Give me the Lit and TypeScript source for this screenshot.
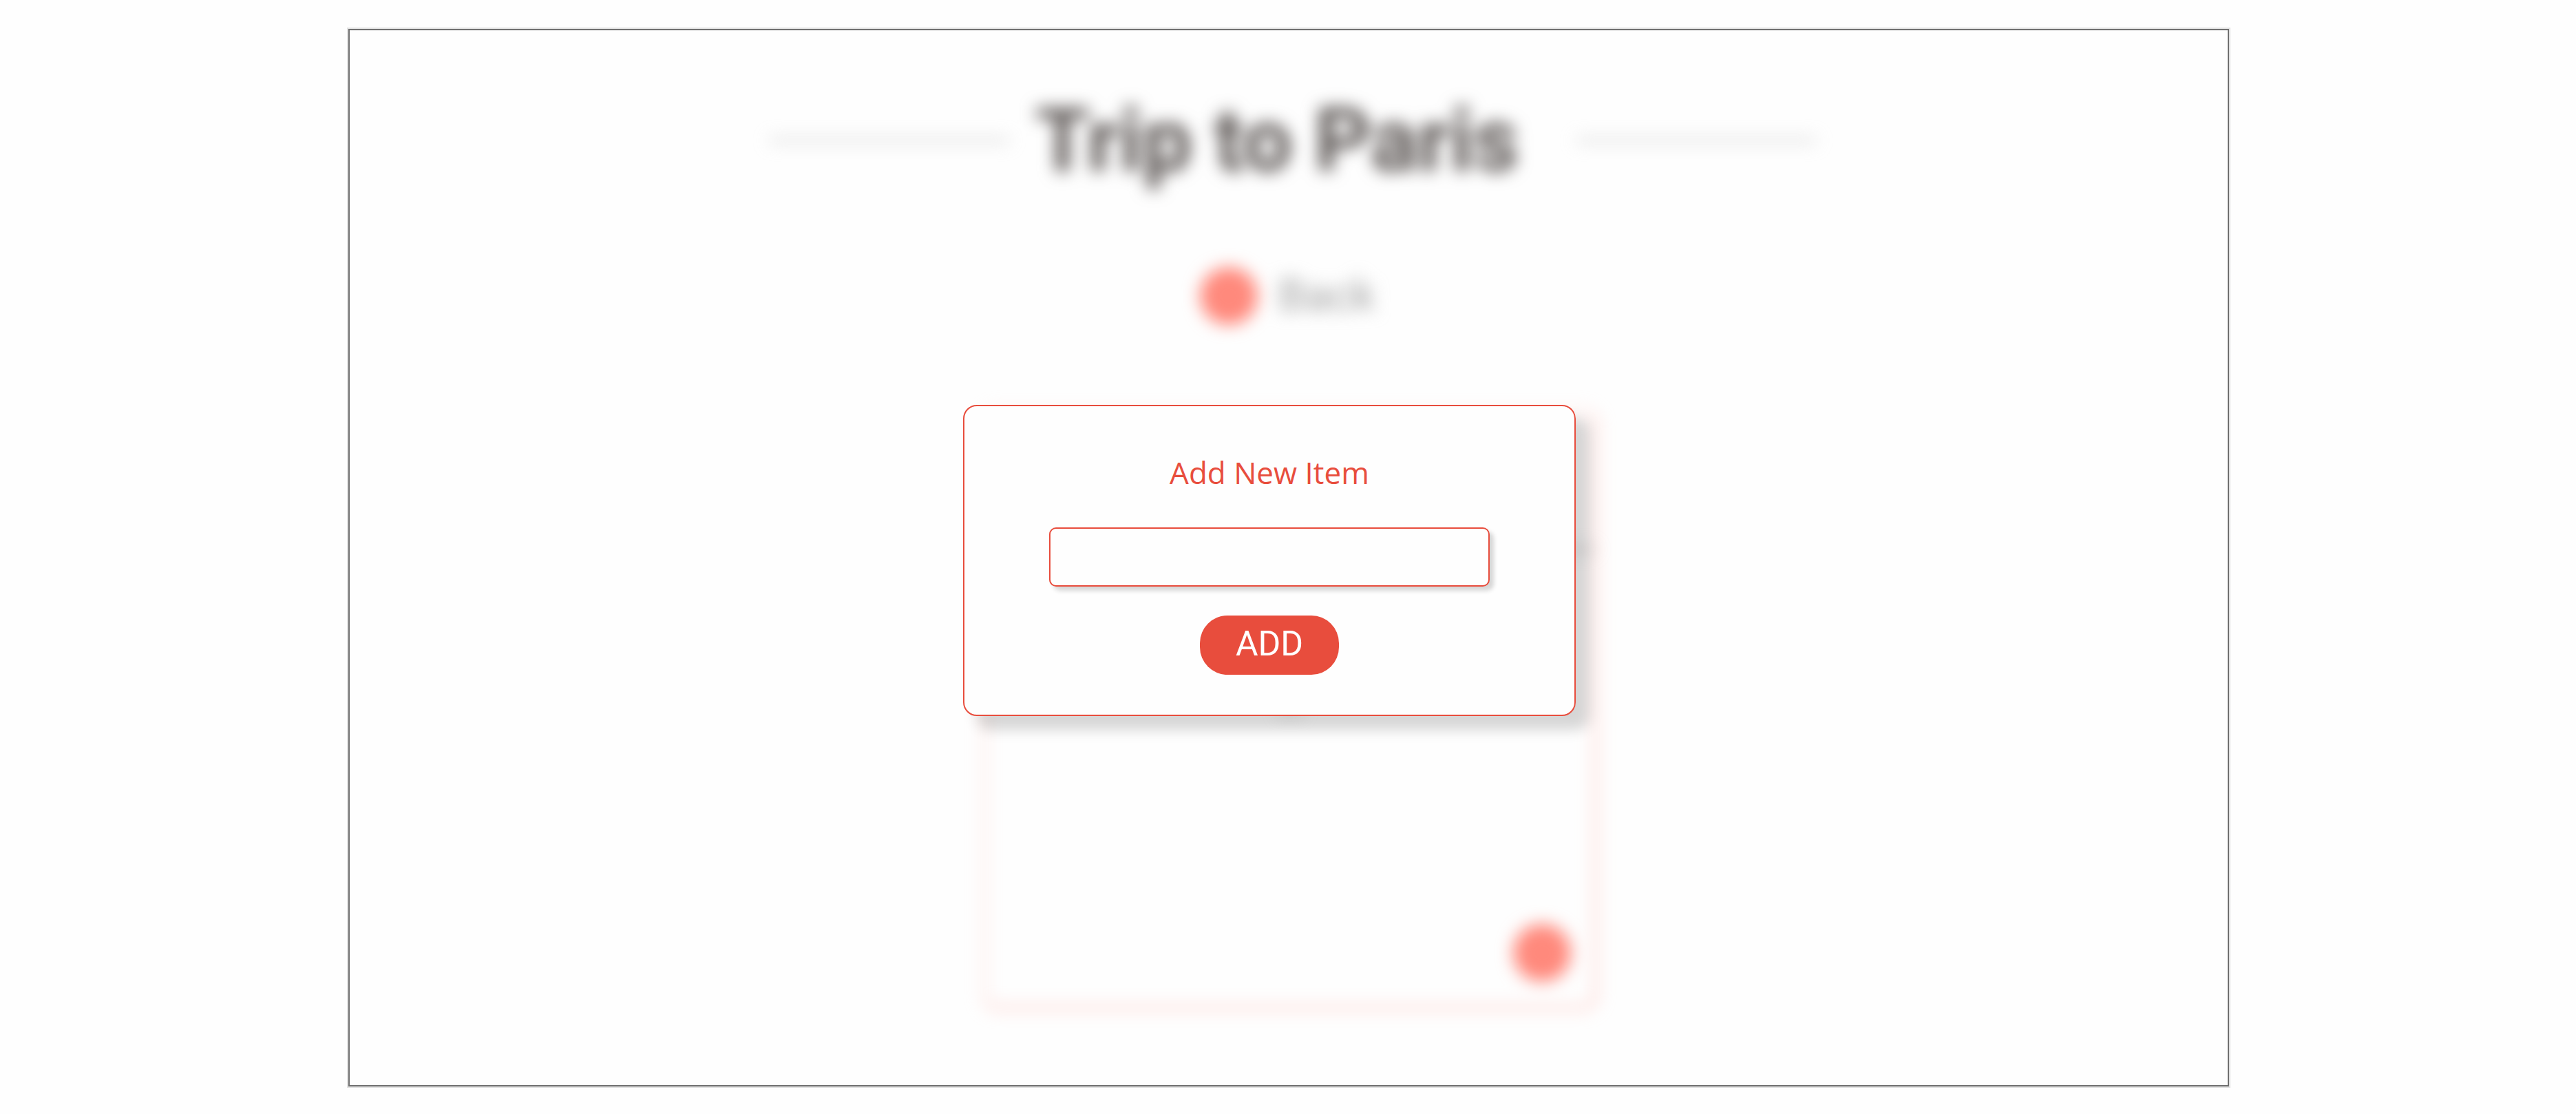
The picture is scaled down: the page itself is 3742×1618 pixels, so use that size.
import { LitElement, html, css } from "lit";
import { customElement, state } from "lit/decorators.js";

@customElement("trip-board")
class TripBoard extends LitElement {
  static styles = css`
    :host { display: block; filter: blur(12px); }
    .board { display: flex; flex-direction: column; align-items: center; padding: 80px 0 110px; }
    .heading { display: grid; grid-template-columns: 348px auto 348px; align-items: center; gap: 38px; padding-left: 12px; }
    .rule { height: 4px; background: #c2c2c2; }
    .title { margin: 0; padding-right: 46px; font: 700 128px/160px Roboto, sans-serif; color: #5c5654; }
    .back { display: flex; align-items: center; gap: 30px; margin: 104px 4px 0 0; padding: 0; border: 0; background: none; font: 400 64px/84px Roboto, sans-serif; color: #a2a2a2; }
    .dot { width: 84px; height: 84px; border: 0; border-radius: 50%; background: #ff897c; padding: 0; }
    .list { box-sizing: border-box; display: flex; flex-direction: column; align-items: flex-end; width: 892px; height: 870px; margin: 124px 0 0 4px; padding: 196px 0 36px; border: 4px solid #ffbab2; border-top-color: #ffd8d3; border-left-color: #ffd8d3; border-radius: 20px; }
    .divider { width: 100%; height: 4px; background: #b0b0b0; }
    .mark { align-self: center; width: 32px; height: 6px; margin-top: 228px; background: #b8b8b8; }
    .add { margin: auto 34px 0 0; }
  `;
  render() {
    return html`
      <div class="board">
        <div class="heading"><span class="rule"></span><h1 class="title">Trip to Paris</h1><span class="rule"></span></div>
        <button class="back" type="button"><span class="dot"></span>Back</button>
        <section class="list">
          <div class="divider"></div>
          <div class="mark"></div>
          <button class="dot add" type="button" aria-label="Add item"></button>
        </section>
      </div>`;
  }
}

@customElement("add-item-dialog")
class AddItemDialog extends LitElement {
  static styles = css`
    .dialog { box-sizing: border-box; display: flex; flex-direction: column; align-items: center; width: 890px; padding: 64px 48px 58px; border: 2px solid #e84d3d; border-radius: 20px; background: #fefefe; box-shadow: 20px 20px 20px rgba(0,0,0,.16); }
    .label { font: 400 44px/64px "Open Sans", sans-serif; color: #e84d3d; }
    .field { box-sizing: border-box; width: 640px; height: 86px; margin: 48px 0 42px; padding: 0 24px; border: 2px solid #e84d3d; border-radius: 10px; background: #fefefe; box-shadow: 6px 6px 6px rgba(0,0,0,.16); font: 400 40px/48px "Open Sans", sans-serif; color: #463c3a; outline: none; }
    .submit { width: 202px; height: 86px; padding: 0 0 4px; border: 0; border-radius: 40px; background: #e84d3d; color: #ffffff; font: 400 50px/60px Roboto, sans-serif; }
  `;
  @state() private item = "";
  private onInput(event: Event) { this.item = (event.target as HTMLInputElement).value; }
  render() {
    return html`
      <form class="dialog" @submit=${(event: Event) => event.preventDefault()}>
        <label class="label" for="item">Add New Item</label>
        <input class="field" id="item" type="text" .value=${this.item} @input=${this.onInput} />
        <button class="submit" type="submit">ADD</button>
      </form>`;
  }
}

@customElement("app-root")
class AppRoot extends LitElement {
  static styles = css`
    :host { display: block; padding: 40px 502px 38px 504px; background: #fefefe; }
    .frame { position: relative; overflow: hidden; border: 2px solid #e2e2e2; }
    .inner { border: 2px solid #707070; }
    .overlay { position: absolute; top: 546px; left: 0; right: 56px; display: flex; justify-content: center; }
  `;
  render() {
    return html`
      <main class="frame">
        <div class="inner"><trip-board></trip-board></div>
        <div class="overlay"><add-item-dialog></add-item-dialog></div>
      </main>`;
  }
}
